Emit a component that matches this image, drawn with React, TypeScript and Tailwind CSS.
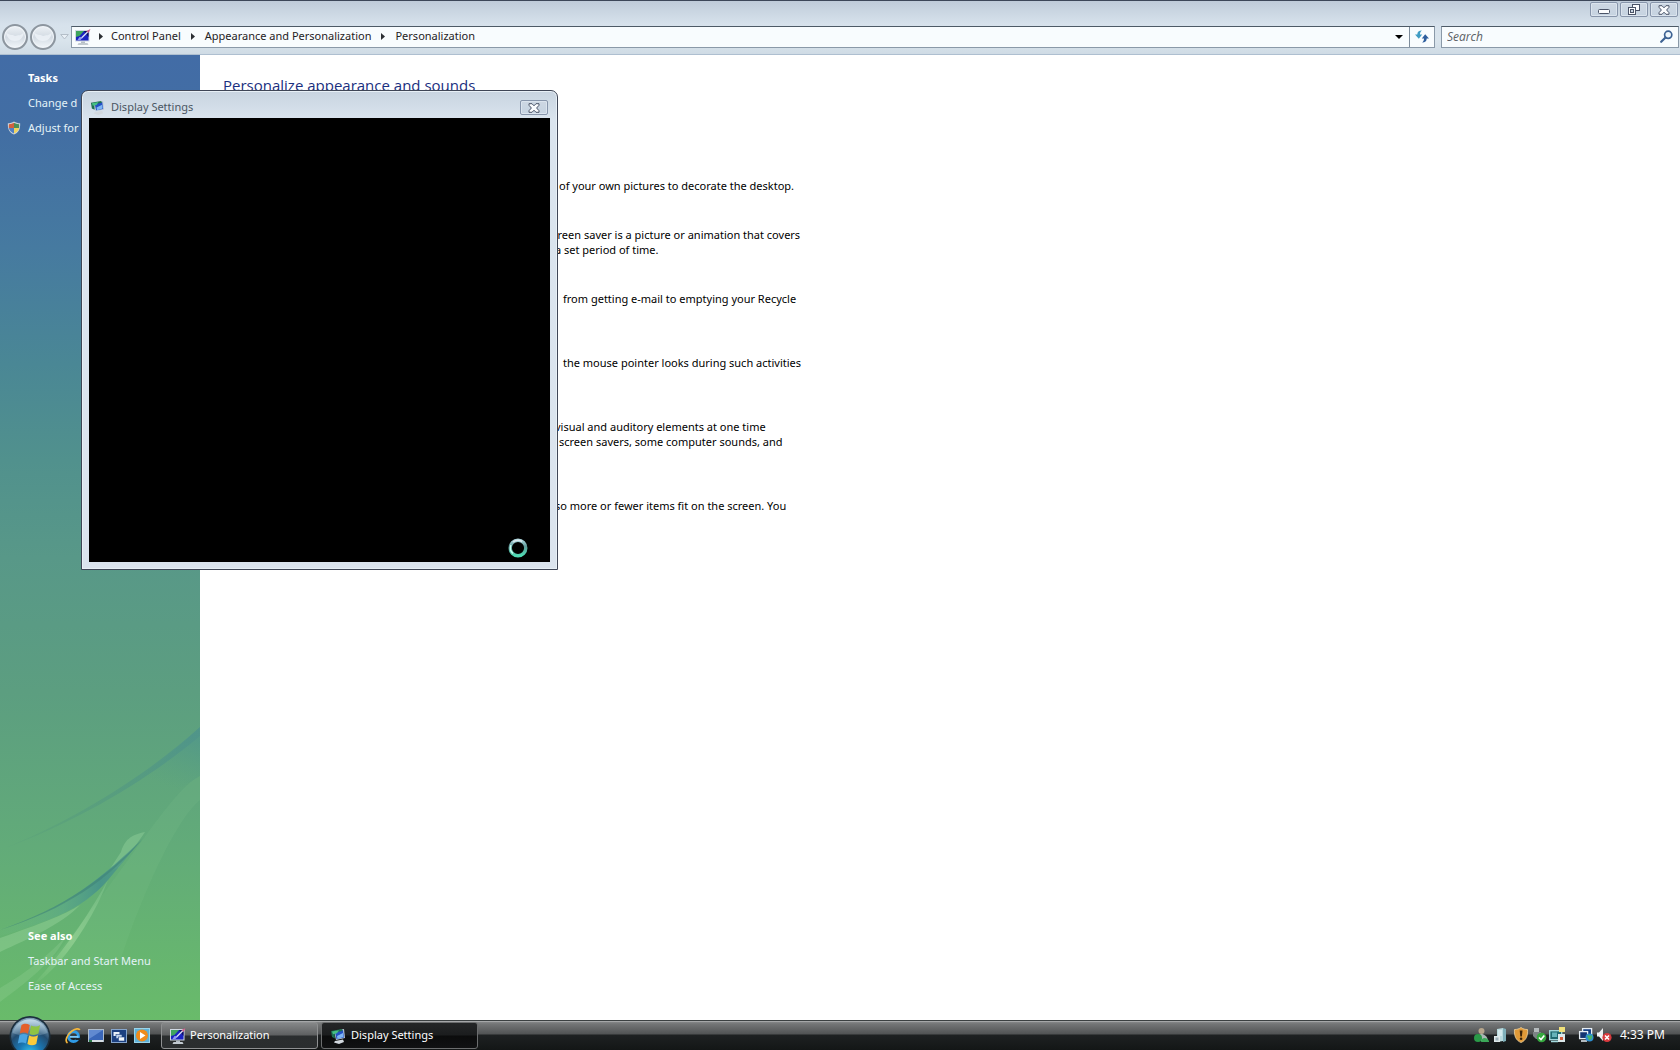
import React from 'react';

type IconProps = { className?: string };

function PersonalizeIcon({ className }: IconProps) {
  return (
    <svg viewBox="0 0 16 16" className={className} aria-hidden="true">
      <rect x="0" y="1" width="14.500" height="11.500" fill="#cfd8e2" />
      <rect x="1" y="2" width="12.500" height="9.500" fill="#1a22c0" />
      <path d="M1 2H9L4.500 7 1 8Z" fill="#3fa45e" />
      <path d="M9 2h4.500v6Z" fill="#0a0c5c" />
      <path d="M5 9.500L13.500 1l1 1L7 9.500Z" fill="#d8dcf6" />
      <path d="M11.500 2L15.500 0l-2 4Z" fill="#cf5a86" />
      <path d="M4.500 8l3 .500-2 2.500h-3Z" fill="#8f97f4" />
      <rect x="6" y="12.500" width="4" height="1.500" fill="#b4bdc6" />
      <path d="M3.500 14h9l1 2h-11Z" fill="#c2cad0" />
    </svg>
  );
}

function DisplayIcon({ className }: IconProps) {
  return (
    <svg viewBox="0 0 16 16" className={className} aria-hidden="true">
      <path d="M4 3l10-2 1 9-9 2Z" fill="#b9c6d4" />
      <path d="M5 4l8-2 1 7.500-7.500 1.500Z" fill="#2450c4" />
      <path d="M1 3l11-2 .500 2-8 1.500.500 6-3-1.500Z" fill="#1d6f52" />
      <path d="M2 3.500l7-1.300-2 3-4 1Z" fill="#45c084" />
      <path d="M7 8l6-3 .500 4-6 2Z" fill="#7fb6f4" />
      <path d="M5 13l8-1.500 1 2.500-5 2L4 14.500Z" fill="#d2d8de" />
    </svg>
  );
}

function ShieldIcon({ className }: IconProps) {
  return (
    <svg viewBox="0 0 16 16" className={className} aria-hidden="true">
      <path d="M8 .5C10 2 12.500 2.500 15 2.500 15.500 9 13 13.500 8 15.500 3 13.500.500 9 1 2.500 3.500 2.500 6 2 8 .5Z" fill="#cfd6dc" />
      <path d="M8 2v6H2.200C2 6.500 2 5 2.200 3.600 4.500 3.600 6.500 3 8 2Z" fill="#d0603e" />
      <path d="M8 2v6h5.800c.200-1.500.200-3 0-4.400C11.500 3.600 9.500 3 8 2Z" fill="#4b8f57" />
      <path d="M2.200 8H8v6.300C4.800 13 2.700 11 2.200 8Z" fill="#4f7fc4" />
      <path d="M13.800 8H8v6.300c3.200-1.300 5.300-3.300 5.800-6.300Z" fill="#f0d45e" />
    </svg>
  );
}

function CloseGlyph() {
  return (
    <svg viewBox="0 0 12 10" className="h-[10px] w-3" aria-hidden="true">
      <path d="M1 .700H4L6 2.800 8 .700h3L11 2.300 8.600 5 11 7.700V9.300H8L6 7.200 4 9.300H1V7.700L3.400 5 1 2.300Z" fill="#fbfcfe" stroke="#4b5468" strokeWidth="1" />
    </svg>
  );
}

function Triangle() {
  return (
    <svg viewBox="0 0 4 7" className="h-[7px] w-1 shrink-0" aria-hidden="true">
      <path d="M0 0l4 3.500-4 3.500Z" fill="#2b2f33" />
    </svg>
  );
}

const captionButton =
  'flex h-[15px] w-[28px] items-center justify-center rounded-[2px] border border-[#8795ab] bg-gradient-to-b from-[#cdd7e3] to-[#c6d3e1] shadow-[inset_0_0_0_1px_#dbe4ee]';

function CaptionButtons() {
  return (
    <div className="flex h-[22px] justify-end gap-[2px] pt-px pr-[2px]">
      <button aria-label="Minimize" className={captionButton}>
        <svg viewBox="0 0 12 5" className="mt-[3px] h-[5px] w-3" aria-hidden="true">
          <rect x=".5" y=".5" width="11" height="4" rx="1" fill="#fbfcfe" stroke="#4b5468" />
        </svg>
      </button>
      <button aria-label="Restore" className={captionButton}>
        <svg viewBox="0 0 12 11" className="h-[11px] w-3" aria-hidden="true">
          <rect x="4.500" y=".5" width="7" height="6" fill="#fbfcfe" stroke="#4b5468" />
          <rect x=".5" y="3.500" width="7" height="7" fill="#fbfcfe" stroke="#4b5468" />
          <rect x="2.500" y="5.500" width="3" height="3" fill="#c8d4e1" stroke="#4b5468" />
        </svg>
      </button>
      <button aria-label="Close" className={captionButton}>
        <CloseGlyph />
      </button>
    </div>
  );
}

function NavOrbs() {
  return (
    <div className="flex w-[71px] shrink-0 items-center pl-[2px]">
      <div className="flex gap-[2px]">
        {['Back', 'Forward'].map((name) => (
          <button
            key={name}
            aria-label={name}
            className="flex size-[26px] items-center justify-center rounded-full border-2 border-[#8d969f] bg-gradient-to-b from-[#eef2f6] via-[#d3dbe3] to-[#f1f6fa] shadow-[inset_0_0_0_1px_#f1f5f9]"
          >
            <svg viewBox="0 0 18 10" className="h-[10px] w-[18px]" aria-hidden="true">
              <path d="M0 0c3 4 6 2 9 4 3-1 6 0 9-4-1 6-4 9-9 9S1 6 0 0Z" fill="#eef3f7" opacity=".8" />
            </svg>
          </button>
        ))}
      </div>
      <button aria-label="Recent pages" className="ml-1">
        <svg viewBox="0 0 9 6" className="h-[6px] w-[9px]" aria-hidden="true">
          <path d="M.7.500h7.600L4.500 5Z" fill="#e9f0f6" stroke="#b4bec8" />
        </svg>
      </button>
    </div>
  );
}

function AddressBar() {
  const crumbs = ['Control Panel', 'Appearance and Personalization', 'Personalization'];
  return (
    <div className="flex h-[27px] items-center pr-px">
      <NavOrbs />
      <div className="flex h-[22px] flex-1 items-center border border-[#8a99a8] border-t-[#4d5a66] bg-[#f8fcfe]">
        <PersonalizeIcon className="ml-[3px] size-4 shrink-0" />
        <nav aria-label="Address" className="flex flex-1 items-center text-[#1f2224]">
          {crumbs.map((crumb, i) => (
            <React.Fragment key={crumb}>
              <span className={i === 0 ? 'flex w-5 justify-center pr-px' : 'flex w-6 justify-center'}>
                <Triangle />
              </span>
              <a href="#" className="whitespace-nowrap">
                {crumb}
              </a>
            </React.Fragment>
          ))}
        </nav>
        <button aria-label="Previous locations" className="flex w-5 justify-center">
          <svg viewBox="0 0 8 4" className="h-1 w-2" aria-hidden="true">
            <path d="M0 0h8L4 4Z" fill="#000" />
          </svg>
        </button>
        <button aria-label="Refresh" className="flex h-full w-[25px] items-center justify-center border-l border-[#7d8c9b]">
          <svg viewBox="0 0 14 13" className="h-[13px] w-[14px]" aria-hidden="true">
            <path d="M7 .5C3.800.500 2.300 2 2.300 4.500H0L3.800 8.800 7.200 4.500H5C5 2.800 5.500 1.500 7 .5Z" fill="#3f9cc4" />
            <path d="M7 12.500c3.200 0 4.700-1.500 4.700-4H14L10.200 4.200 6.800 8.500H9C9 10.200 8.500 11.500 7 12.500Z" fill="#2d5e9e" />
          </svg>
        </button>
      </div>
      <div className="ml-[6px] flex h-[22px] w-[238px] items-center border border-[#8a99a8] border-t-[#4d5a66] bg-[#f8fcfe] pr-[5px]">
        <input
          aria-label="Search"
          placeholder="Search"
          className="min-w-0 flex-1 bg-transparent pl-[5px] font-['Open_Sans',sans-serif] text-[12px] italic outline-none placeholder:text-[#5c6166]"
        />
        <button aria-label="Start search">
          <svg viewBox="0 0 13 13" className="size-[13px]" aria-hidden="true">
            <circle cx="8.200" cy="4.800" r="3.600" fill="#eef6fb" stroke="#3d6293" strokeWidth="1.700" />
            <path d="M5.500 7.500L1.200 11.800" stroke="#3d6293" strokeWidth="2.200" strokeLinecap="round" />
          </svg>
        </button>
      </div>
    </div>
  );
}

function SidebarArt() {
  return (
    <svg viewBox="0 0 200 320" preserveAspectRatio="none" className="absolute bottom-0 left-0 h-[320px] w-full" aria-hidden="true">
      <defs>
        <linearGradient id="streakA" gradientUnits="userSpaceOnUse" x1="185" y1="35" x2="165" y2="85">
          <stop offset="0" stopColor="#4f968c" stopOpacity=".65" />
          <stop offset="1" stopColor="#559c84" stopOpacity="0" />
        </linearGradient>
        <linearGradient id="edge" x1="1" y1="0" x2="0" y2="0">
          <stop offset="0" stopColor="#4f948a" stopOpacity=".8" />
          <stop offset="1" stopColor="#509478" stopOpacity=".1" />
        </linearGradient>
        <linearGradient id="streakB" x1="1" y1="0" x2="0" y2="0">
          <stop offset="0" stopColor="#4d9584" stopOpacity=".6" />
          <stop offset=".3" stopColor="#46928a" stopOpacity=".9" />
          <stop offset=".6" stopColor="#5aa88c" stopOpacity=".5" />
          <stop offset="1" stopColor="#6fbb86" stopOpacity=".1" />
        </linearGradient>
        <linearGradient id="glow" x1="1" y1="0" x2="0" y2="1">
          <stop offset="0" stopColor="#8fd09a" stopOpacity=".3" />
          <stop offset=".5" stopColor="#a0d89c" stopOpacity=".6" />
          <stop offset="1" stopColor="#a0dc9c" stopOpacity="0" />
        </linearGradient>
      </defs>
      <path d="M200 27C150 75 80 122 0 150C70 138 150 110 200 76Z" fill="url(#streakA)" />
      <path d="M200 27C150 72 80 118 0 150C80 121 150 78 200 36Z" fill="url(#edge)" />
      <path d="M200 76C170 90 120 180 50 262L120 262C140 200 175 120 200 100Z" fill="#8fcf94" opacity=".12" />
      <path d="M145 132C130 135 125 140 121 152L108 172L118 168C126 157 135 147 145 132Z" fill="#93d09c" opacity=".45" />
      <path d="M108 180C92 208 70 245 30 288C54 272 70 250 84 228C94 212 102 196 108 180Z" fill="url(#glow)" />
      <path d="M143 138C105 175 68 208 0 229L0 236C48 222 82 210 108 180Z" fill="url(#streakB)" />
      <path d="M142 140C105 177 66 207 0 230C66 209 108 180 142 140Z" fill="#3f8478" opacity=".6" />
      <path d="M0 238C40 224 64 215 80 205C62 224 30 238 0 252Z" fill="#a6dca5" opacity=".35" />
      <path d="M0 288C28 272 52 252 66 236C54 262 24 284 0 302Z" fill="#a6dca5" opacity=".22" />
    </svg>
  );
}

function Sidebar() {
  return (
    <aside className="relative flex w-[200px] shrink-0 flex-col justify-between bg-[linear-gradient(180deg,#426ca6_0%,#426ea3_8%,#467aa0_20%,#4a8795_32%,#51918d_42%,#589888_52%,#5c9e80_66%,#62ab79_82%,#69bb6a_100%)] text-[#e4f3f8]">
      <SidebarArt />
      <div className="relative pt-[13px]">
        <h2 className="pl-7 leading-5 font-bold text-white">Tasks</h2>
        <a href="#" className="mt-[5px] block pl-7 leading-5 whitespace-nowrap">
          Change d
        </a>
        <a href="#" className="mt-[5px] flex items-center pl-[7px] leading-5 whitespace-nowrap">
          <ShieldIcon className="mr-[7px] size-[14px] shrink-0" />
          Adjust for
        </a>
      </div>
      <div className="relative pb-6 pl-7">
        <h2 className="leading-5 font-bold text-white">See also</h2>
        <a href="#" className="mt-[5px] block leading-5">
          Taskbar and Start Menu
        </a>
        <a href="#" className="mt-[5px] block leading-5">
          Ease of Access
        </a>
      </div>
    </aside>
  );
}

function Content() {
  return (
    <main className="flex-1 bg-white pl-[23px] text-black">
      <h1 className="pt-[18px] font-['Open_Sans',sans-serif] text-[15px] leading-6 text-[#1a2f80]">
        Personalize appearance and sounds
      </h1>
      <div className="pt-[81px] pl-[324px] leading-[15px] whitespace-nowrap">
        <p className="pl-3">of your own pictures to decorate the desktop.</p>
        <p className="mt-[34px]">
          screen saver is a picture or animation that covers
          <br />
          <span className="pl-2">a set period of time.</span>
        </p>
        <p className="mt-[34px] pl-4">from getting e-mail to emptying your Recycle</p>
        <p className="mt-[49px] pl-4">the mouse pointer looks during such activities</p>
        <p className="mt-[49px] pl-2">
          visual and auditory elements at one time
          <br />
          <span className="pl-1">screen savers, some computer sounds, and</span>
        </p>
        <p className="mt-[49px] pl-2">so more or fewer items fit on the screen. You</p>
      </div>
    </main>
  );
}

function DisplaySettingsWindow() {
  return (
    <section
      aria-label="Display Settings"
      className="absolute top-[90px] left-[81px] flex h-[480px] w-[477px] flex-col rounded-t-[7px] border border-[#3f4656] bg-gradient-to-b from-[#c8d4e0] via-[#dae4ee] via-[28px] to-[#dbe4ee] px-[7px] pb-[7px] shadow-[inset_0_0_0_1px_#e8f0f6]"
    >
      <div className="flex h-[27px] shrink-0 items-center pt-[6px]">
        <DisplayIcon className="mb-px ml-px size-[15px]" />
        <h2 className="ml-[6px] flex-1 text-[#4a5562]">Display Settings</h2>
        <button aria-label="Close Display Settings" className={`${captionButton} mr-[2px]`}>
          <CloseGlyph />
        </button>
      </div>
      <div className="flex flex-1 items-end justify-end bg-black pr-[22px] pb-1">
        <svg viewBox="0 0 20 20" className="size-5" role="img" aria-label="Busy">
          <defs>
            <linearGradient id="ring" x1="0" y1="0" x2="0" y2="1">
              <stop offset="0" stopColor="#a9d3da" />
              <stop offset=".4" stopColor="#5f9a9a" />
              <stop offset="1" stopColor="#4fdcb4" />
            </linearGradient>
          </defs>
          <circle cx="10" cy="10" r="7.800" fill="none" stroke="url(#ring)" strokeWidth="3.400" />
          <path d="M5 15.500A7.500 7.500 0 0 1 3 7" fill="none" stroke="#c9fff0" strokeWidth="1.500" />
          <path d="M5 4A8 8 0 0 1 14 3.500" fill="none" stroke="#dce8ee" strokeWidth="1.500" />
        </svg>
      </div>
    </section>
  );
}

function StartOrb() {
  return (
    <button aria-label="Start" className="absolute bottom-0 left-[9px] h-[34px] w-[42px] overflow-hidden">
      <svg viewBox="0 0 42 34" className="h-[34px] w-[42px]" aria-hidden="true">
        <defs>
          <radialGradient id="orb" cx=".5" cy=".95" r=".85">
            <stop offset="0" stopColor="#35c5ee" />
            <stop offset=".35" stopColor="#1a78b4" />
            <stop offset=".7" stopColor="#234c70" />
            <stop offset="1" stopColor="#7d9cb4" />
          </radialGradient>
          <linearGradient id="orbShine" x1="0" y1="0" x2="0" y2="1">
            <stop offset="0" stopColor="#c9e0ee" stopOpacity=".95" />
            <stop offset="1" stopColor="#8fb0c6" stopOpacity=".3" />
          </linearGradient>
        </defs>
        <circle cx="21" cy="20.500" r="20.500" fill="#1b2e3d" />
        <circle cx="21" cy="20.500" r="18.800" fill="url(#orb)" />
        <path d="M3.500 17A18 18 0 0 1 38.500 17C30 21 12 21 3.500 17Z" fill="url(#orbShine)" />
        <path d="M12.500 9C15.500 7 18 7.500 20.800 9L19 17.700C16.500 16 13.500 16 10.800 17.500Z" fill="#e4602c" />
        <path d="M22 9.500C25 11 28 11 31 9L29.500 17.500C26.500 19.300 23.500 19.300 20.500 18Z" fill="#8fc444" />
        <path d="M10.500 19C13.500 17.500 16 17.500 18.800 19.100L17 27.500C14.500 26 11.500 26 8.800 27.500Z" fill="#4aa4e2" />
        <path d="M20 19.500C23 21 26 21 29 19.300L27.300 28C24.300 29.700 21.300 29.500 18.400 28Z" fill="#fbcb3c" />
      </svg>
    </button>
  );
}

function QuickLaunch() {
  return (
    <div className="flex items-center gap-[7px]">
      <button aria-label="Internet Explorer">
        <svg viewBox="0 0 16 16" className="size-4" aria-hidden="true">
          <circle cx="8.500" cy="8.500" r="5" fill="none" stroke="#2f9be6" strokeWidth="3" />
          <path d="M5 8.800h8.500" stroke="#7cc8f8" strokeWidth="2" />
          <path d="M10 10h6v2h-5Z" fill="#1a2630" />
          <path d="M2.500 15C-.5 13 2 6.500 7 3 10.500.500 14 .200 14.800 2" fill="none" stroke="#f4b63c" strokeWidth="1.700" />
        </svg>
      </button>
      <button aria-label="Show desktop">
        <svg viewBox="0 0 16 14" className="h-[14px] w-4" aria-hidden="true">
          <rect x=".5" y=".5" width="15" height="12" fill="#3a66b8" stroke="#aebccb" />
          <path d="M1 1h14L1 10Z" fill="#6c92d6" opacity=".8" />
          <rect x="1" y="11" width="14" height="2" fill="#d6dee4" />
          <rect x="1" y="11" width="3" height="2" fill="#2a7a48" />
        </svg>
      </button>
      <button aria-label="Switch between windows">
        <svg viewBox="0 0 16 14" className="h-[14px] w-4" aria-hidden="true">
          <rect x=".5" y=".5" width="15" height="13" fill="#1c4080" stroke="#86a5cc" />
          <rect x="2.500" y="3" width="6" height="4" fill="#e8f0fa" />
          <rect x="5" y="5.500" width="6" height="4" fill="#c4d6ee" stroke="#1c4080" strokeWidth=".6" />
          <rect x="7.500" y="8" width="6" height="4" fill="#f4f8fd" stroke="#1c4080" strokeWidth=".6" />
        </svg>
      </button>
      <button aria-label="Windows Media Player">
        <svg viewBox="0 0 16 15" className="h-[15px] w-4" aria-hidden="true">
          <rect x=".5" y=".5" width="15" height="14" fill="#5fb2d8" stroke="#9ad4ea" />
          <circle cx="8" cy="7.500" r="6" fill="#f08c1c" />
          <path d="M6 4l5.500 3.500L6 11Z" fill="#fff" />
        </svg>
      </button>
    </div>
  );
}

function Tray() {
  return (
    <div className="flex items-center gap-[2px] pb-[2px]">
      <svg viewBox="0 0 17 16" className="h-4 w-[17px]" role="img" aria-label="Messenger">
        <circle cx="8.500" cy="4" r="3" fill="#b7a68c" />
        <path d="M4 14c0-5 2-7 4.500-7s6 2 6.500 7Z" fill="#a9b8b4" />
        <circle cx="5" cy="11" r="4" fill="#2a9a48" />
        <path d="M8 15c0-5 6-5 8-1v1Z" fill="#3ba858" />
      </svg>
      <svg viewBox="0 0 16 16" className="size-4" role="img" aria-label="Server">
        <path d="M5 2l6-1v13l-6 1Z" fill="#b9dade" />
        <path d="M11 1l3 1v12l-3 1Z" fill="#7fb0ba" />
        <path d="M6 4h4M6 6h4M6 8h4" stroke="#eef8fa" />
        <rect x="2" y="9" width="6" height="6" fill="#dfe8ea" />
        <rect x="3.500" y="10.500" width="3" height="3" fill="#9cb0b8" />
      </svg>
      <svg viewBox="0 0 16 16" className="ml-[3px] size-4" role="img" aria-label="Security alert">
        <path d="M8 .5C10 2 12 2.500 14.500 2.500 15 9 13 13.500 8 15.500 3 13.500 1 9 1.500 2.500 4 2.500 6 2 8 .5Z" fill="#e09a38" stroke="#f0d4a0" strokeWidth=".8" />
        <path d="M6.700 3.500h2.800L8.900 9.500H7.300Z" fill="#3c2408" />
        <circle cx="8.100" cy="11.700" r="1.300" fill="#3c2408" />
      </svg>
      <svg viewBox="0 0 16 16" className="size-4" role="img" aria-label="Safely remove hardware">
        <rect x="3" y="1" width="5" height="4" fill="#b4babc" />
        <path d="M2 5h8v4l-3 3H5L2 9Z" fill="#7c8385" />
        <circle cx="10.500" cy="10.500" r="4.800" fill="#35a83e" />
        <path d="M8 10.500l2 2 3.300-4" fill="none" stroke="#fff" strokeWidth="1.600" />
      </svg>
      <svg viewBox="0 0 17 16" className="h-4 w-[17px]" role="img" aria-label="Virtual machine">
        <rect x=".7" y="3.700" width="12" height="9" fill="#1f6a70" stroke="#a5dce0" strokeWidth="1.300" />
        <rect x="3" y="5.500" width="5" height="4.500" fill="#65b4ba" />
        <rect x="10" y="0" width="6" height="5" fill="#efe07a" />
        <rect x="9" y="7" width="7" height="8" fill="#dce8ea" />
        <rect x="11" y="10" width="3" height="3" fill="#d45a38" />
        <path d="M2 14.500h7" stroke="#a5dce0" strokeWidth="1.500" />
      </svg>
      <svg viewBox="0 0 16 16" className="ml-[10px] size-4" role="img" aria-label="Network">
        <rect x="4.600" y="1.600" width="9" height="8" fill="#0f3a80" stroke="#e6eef5" strokeWidth="1.300" />
        <rect x="1.600" y="4.600" width="8" height="7" fill="#143472" stroke="#e6eef5" strokeWidth="1.300" />
        <path d="M3 14h6" stroke="#e6eef5" strokeWidth="1.500" />
        <circle cx="11.500" cy="10.500" r="4" fill="#2d8fd0" />
        <path d="M9 9c2-2 3 1 5-1 1 3-1 5-3 5Z" fill="#48b46c" />
      </svg>
      <svg viewBox="0 0 16 16" className="size-4" role="img" aria-label="Volume muted">
        <path d="M1 5.500h2L7 1v13L3 9.500H1Z" fill="#eef1f3" />
        <circle cx="11" cy="10.500" r="4.600" fill="#d93a3e" />
        <path d="M9 8.500l4 4M13 8.500l-4 4" stroke="#fff" strokeWidth="1.500" />
      </svg>
      <time className="ml-[6px] text-[12px] text-white">4:33 PM</time>
    </div>
  );
}

function Taskbar() {
  return (
    <footer className="relative flex h-[30px] shrink-0 items-center justify-between border-t border-[#3b4041] bg-[linear-gradient(180deg,#8e9091_0px,#737576_3px,#515354_13px,#1e2122_14px,#131616_29px)] pr-[15px] pl-[65px] shadow-[inset_0_1px_0_#a5a7a8]">
      <StartOrb />
      <div className="flex items-center">
        <QuickLaunch />
        <button className="ml-[11px] flex h-[27px] w-[157px] items-center rounded-[3px] border border-[#8e9091] bg-[linear-gradient(180deg,#858788_0%,#5e6061_48%,#2b2e2f_52%,#2a2d2e_100%)] pl-2 text-left text-white">
          <PersonalizeIcon className="mr-1 size-4" />
          Personalization
        </button>
        <button className="ml-[3px] flex h-[27px] w-[157px] items-center rounded-[3px] border border-[#6b6d6e] bg-[linear-gradient(180deg,#242627_0%,#1b1d1e_48%,#0b0c0c_52%,#101112_100%)] pl-2 text-left text-white">
          <DisplayIcon className="mr-[5px] size-4" />
          Display Settings
        </button>
      </div>
      <Tray />
    </footer>
  );
}

export default function App() {
  return (
    <div className="relative flex min-h-screen flex-col overflow-hidden font-['Noto_Sans',sans-serif] text-[11px]">
      <header className="h-[55px] shrink-0 border-t border-b border-t-[#3d4759] border-b-[#aebfd0] bg-[linear-gradient(180deg,#bfcbd9_0%,#c9d5e1_18%,#d7e2ec_45%,#d9e4ec_75%,#cfdbe5_100%)]">
        <CaptionButtons />
        <AddressBar />
      </header>
      <div className="flex flex-1">
        <Sidebar />
        <Content />
      </div>
      <Taskbar />
      <DisplaySettingsWindow />
    </div>
  );
}
